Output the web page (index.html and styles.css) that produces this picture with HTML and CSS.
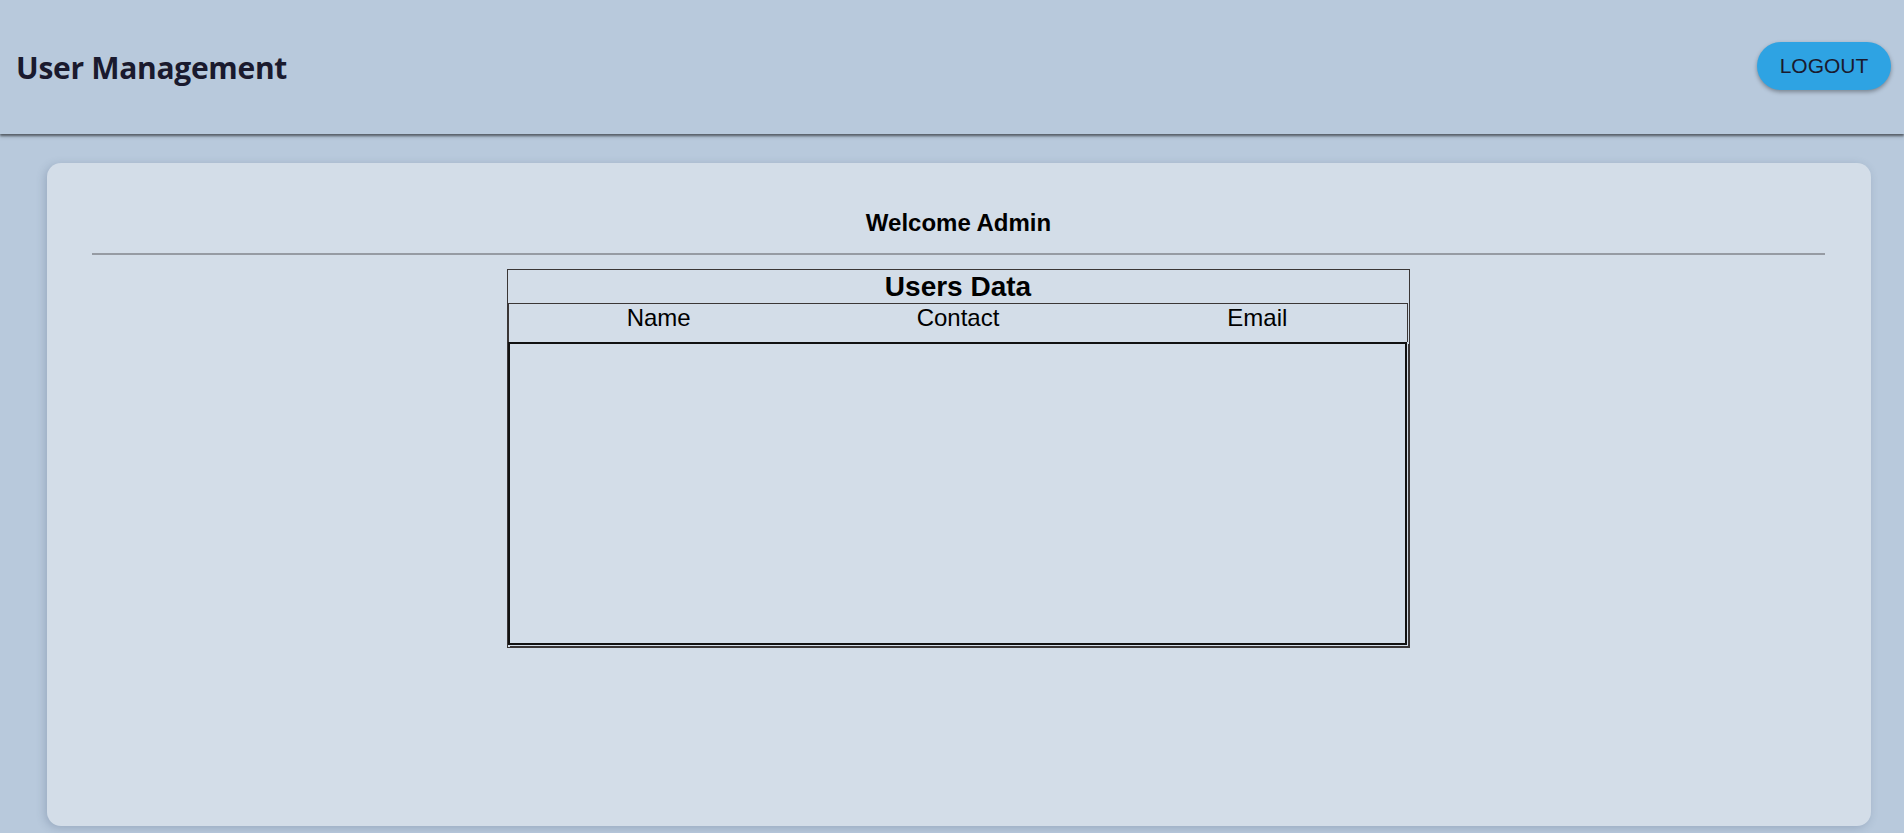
FILE: index.html
```html
<!DOCTYPE html>
<html>
<head>
<meta charset="utf-8">
<title>User Management</title>
<link rel="stylesheet" href="styles.css">
</head>
<body>
<header class="appbar">
  <h1 class="title">User Management</h1>
  <button class="logout">LOGOUT</button>
</header>
<main class="card">
  <h2 class="welcome">Welcome Admin</h2>
  <hr class="divider">
  <div class="users">
    <div class="users-title">Users Data</div>
    <div class="users-head">
      <div class="col">Name</div>
      <div class="col">Contact</div>
      <div class="col">Email</div>
    </div>
    <div class="users-body"></div>
  </div>
</main>
</body>
</html>
```
FILE: styles.css
```css
html, body {
  margin: 0;
  padding: 0;
  background: #b8c9dc;
  height: 100%;
  overflow: hidden;
}
body {
  font-family: "Liberation Sans", Arial, sans-serif;
}
.appbar {
  height: 134px;
  box-sizing: border-box;
  display: flex;
  align-items: center;
  justify-content: space-between;
  padding: 0 13px 0 16px;
  background: #b8c9dc;
  box-shadow: 0 2px 2px rgba(0,0,0,0.45), 0 3px 4px rgba(0,0,0,0.15);
  position: relative;
}
.title {
  margin: 0;
  font-family: "Open Sans", "Noto Sans", sans-serif;
  font-weight: 700;
  font-size: 30px;
  color: #1a1a2e;
  letter-spacing: -0.3px;
}
.logout {
  width: 134px;
  height: 48px;
  border: none;
  border-radius: 24px;
  background: #2ea3e3;
  color: #1a1a2e;
  font-family: "Liberation Sans", Arial, sans-serif;
  font-size: 21px;
  box-shadow: 0 2px 4px rgba(0,0,0,0.35);
  margin-top: -3px;
}
.card {
  margin: 29px 33px 0 47px;
  height: 663px;
  box-sizing: border-box;
  background: #d3dde8;
  border-radius: 14px;
  padding: 45px 46px 0 45px;
  box-shadow: -2px 2px 8px rgba(60,80,110,0.25);
}
.welcome {
  margin: 0;
  text-align: center;
  font-size: 24px;
  font-weight: 700;
  color: #000;
  line-height: 30px;
}
.divider {
  margin: 15px 0 0 0;
  border: none;
  height: 2px;
  background: #969ba3;
}
.users {
  width: 903px;
  margin: 14px auto 0 auto;
  box-sizing: border-box;
  border: 1px solid #3a3636;
  height: 379px;
  display: flex;
  flex-direction: column;
  padding-right: 1px;
}
.users-title {
  height: 33px;
  text-align: center;
  font-size: 28px;
  font-weight: 700;
  line-height: 33px;
  color: #000;
}
.users-head {
  display: flex;
  border: 1px solid #3a3636;
  border-bottom: none;
  height: 39px;
  box-sizing: border-box;
}
.col {
  flex: 1;
  text-align: center;
  font-size: 24px;
  line-height: 27px;
  color: #000;
}
.users-body {
  flex: 1;
  border: 2px solid #111;
  box-shadow: 1px 1px 0 #d3dde8, 2px 2px 0 #3a3636;
  margin-bottom: 2px;
  margin-right: 1px;
}
```
